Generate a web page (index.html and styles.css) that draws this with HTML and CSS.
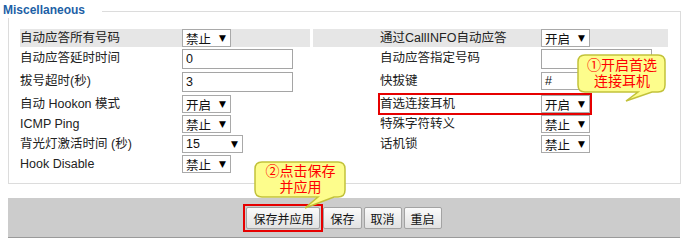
FILE: index.html
```html
<!DOCTYPE html>
<html lang="zh-CN">
<head>
    <meta charset="UTF-8">
    <meta name="viewport" content="width=device-width, initial-scale=1.0">
    <title>Miscellaneous</title>
    <link rel="stylesheet" href="styles.css">
</head>
<body>
    <div class="panel">
        <div class="legend">Miscellaneous</div>
        <div class="rows">
            <div class="row head">
                <div class="half left">
                    <span class="label">自动应答所有号码</span>
                    <span class="sel">禁止<i>▼</i></span>
                </div>
                <div class="half right">
                    <span class="label">通过CallINFO自动应答</span>
                    <span class="sel">开启<i>▼</i></span>
                </div>
            </div>
            <div class="row tall">
                <div class="half left">
                    <span class="label">自动应答延时时间</span>
                    <input type="text" class="field" value="0">
                </div>
                <div class="half right">
                    <span class="label">自动应答指定号码</span>
                    <input type="text" class="field" value="">
                </div>
            </div>
            <div class="row tall">
                <div class="half left">
                    <span class="label">拔号超时(秒)</span>
                    <input type="text" class="field" value="3">
                </div>
                <div class="half right">
                    <span class="label">快拔键</span>
                    <span class="sel">#<i>▼</i></span>
                </div>
            </div>
            <div class="row">
                <div class="half left">
                    <span class="label">自动 Hookon 模式</span>
                    <span class="sel">开启<i>▼</i></span>
                </div>
                <div class="half right">
                    <div class="mark">
                        <span class="label">首选连接耳机</span>
                        <span class="sel">开启<i>▼</i></span>
                    </div>
                </div>
            </div>
            <div class="row">
                <div class="half left">
                    <span class="label">ICMP Ping</span>
                    <span class="sel">禁止<i>▼</i></span>
                </div>
                <div class="half right">
                    <span class="label">特殊字符转义</span>
                    <span class="sel">禁止<i>▼</i></span>
                </div>
            </div>
            <div class="row">
                <div class="half left">
                    <span class="label">背光灯激活时间 (秒)</span>
                    <span class="sel wide">15<i>▼</i></span>
                </div>
                <div class="half right">
                    <span class="label">话机锁</span>
                    <span class="sel">禁止<i>▼</i></span>
                </div>
            </div>
            <div class="row">
                <div class="half left">
                    <span class="label">Hook Disable</span>
                    <span class="sel">禁止<i>▼</i></span>
                </div>
                <div class="half right"></div>
            </div>
        </div>
    </div>

    <div class="bar">
        <span class="mark-btn"><button>保存并应用</button></span>
        <button>保存</button>
        <button>取消</button>
        <button>重启</button>
    </div>

    <!-- 提示气泡 -->
    <div class="callout c1">
        <svg width="92" height="50" viewBox="0 0 92 50">
            <path d="M8 1 H81 Q88 1 88 8 V31 Q88 38 81 38 H75 L49 47 L61 38 H8 Q1 38 1 31 V8 Q1 1 8 1 Z"/>
        </svg>
        <div class="tip-text">①开启首选<br>连接耳机</div>
    </div>
    <div class="callout c2">
        <svg width="94" height="50" viewBox="0 0 94 50">
            <path d="M8 1 H84 Q91 1 91 8 V29 Q91 36 84 36 H80 L51 47 L64 36 H8 Q1 36 1 29 V8 Q1 1 8 1 Z"/>
        </svg>
        <div class="tip-text">②点击保存<br>并应用</div>
    </div>
</body>
</html>
```

FILE: styles.css
```css
body {
    margin: 0;
    width: 682px;
    font-family: "Liberation Sans", "Noto Sans CJK SC", sans-serif;
    font-size: 12px;
    color: #222;
    background-color: #fff;
}

.panel {
    box-sizing: border-box;
    width: 673px;
    margin: 11px 0 0 8px;
    padding: 0 12px 10px 11px;
    border: 1px solid #dcdcdc;
}

.legend {
    width: fit-content;
    margin: -10px 0 0 -17px;
    padding-right: 17px;
    line-height: 16px;
    font-weight: bold;
    color: #1d5fa6;
    background-color: #fff;
}

.rows {
    display: grid;
    row-gap: 2px;
    margin-top: 11px;
}

.row {
    display: flex;
    gap: 3px;
    height: 18px;
}

.row.tall {
    height: 21px;
}

.half {
    display: grid;
    align-items: center;
}

.half.left {
    width: 290px;
    grid-template-columns: 162px 128px;
}

.half.right {
    width: 288px;
    padding-left: 67px;
    grid-template-columns: 161px 127px;
}

.row.head .half {
    background-color: #e6e6e6;
}

.row.tall .half {
    align-items: start;
}

.label {
    white-space: nowrap;
    line-height: 18px;
    font-size: 12.5px;
}

.sel {
    box-sizing: border-box;
    display: inline-flex;
    align-items: center;
    justify-content: space-between;
    width: 49px;
    height: 18px;
    padding: 0 4px 0 3px;
    border: 1px solid #a9a9a9;
    background-color: #fff;
    font-size: 12.5px;
    color: #111;
}

.sel.wide {
    width: 61px;
}

.sel i {
    font-family: "DejaVu Sans", sans-serif;
    font-style: normal;
    font-size: 9px;
    color: #000;
}

.field {
    box-sizing: border-box;
    width: 111px;
    height: 20px;
    margin: 0;
    padding: 0 3px;
    border: 1px solid #a5a5a5;
    font-family: inherit;
    font-size: 12.5px;
    color: #111;
}

.mark {
    grid-column: span 2;
    display: grid;
    grid-template-columns: 161px 49px;
    align-items: center;
    width: 210px;
    outline: 2px solid #e60000;
    outline-offset: 0;
}

.bar {
    box-sizing: border-box;
    display: flex;
    justify-content: center;
    gap: 2px;
    width: 672px;
    margin: 14px 0 0 8px;
    padding: 9px 0 8px;
    background-color: #cccccc;
    border-bottom: 1px solid #9a9a9a;
}

button {
    height: 22px;
    padding: 0 6px;
    margin: 0;
    border: 1px solid #a3a3a3;
    border-radius: 2px;
    background: linear-gradient(#fafafa, #e2e2e2);
    font-family: inherit;
    font-size: 12px;
    color: #111;
}

.mark-btn {
    display: inline-flex;
    outline: 2px solid #e60000;
    outline-offset: 1px;
    margin-right: 1px;
}

.callout {
    position: absolute;
}

.callout svg {
    position: absolute;
    left: 0;
    top: 0;
}

.callout path {
    fill: #fdfd8c;
    stroke: #c2c23a;
    stroke-width: 1.5;
}

.tip-text {
    position: relative;
    text-align: center;
    font-size: 14px;
    line-height: 16px;
    color: #ff0000;
}

.c1 {
    left: 577px;
    top: 54px;
    width: 90px;
}

.c1 .tip-text {
    padding-top: 3px;
}

.c2 {
    left: 254px;
    top: 161px;
    width: 93px;
}

.c2 .tip-text {
    padding-top: 2px;
}
```
